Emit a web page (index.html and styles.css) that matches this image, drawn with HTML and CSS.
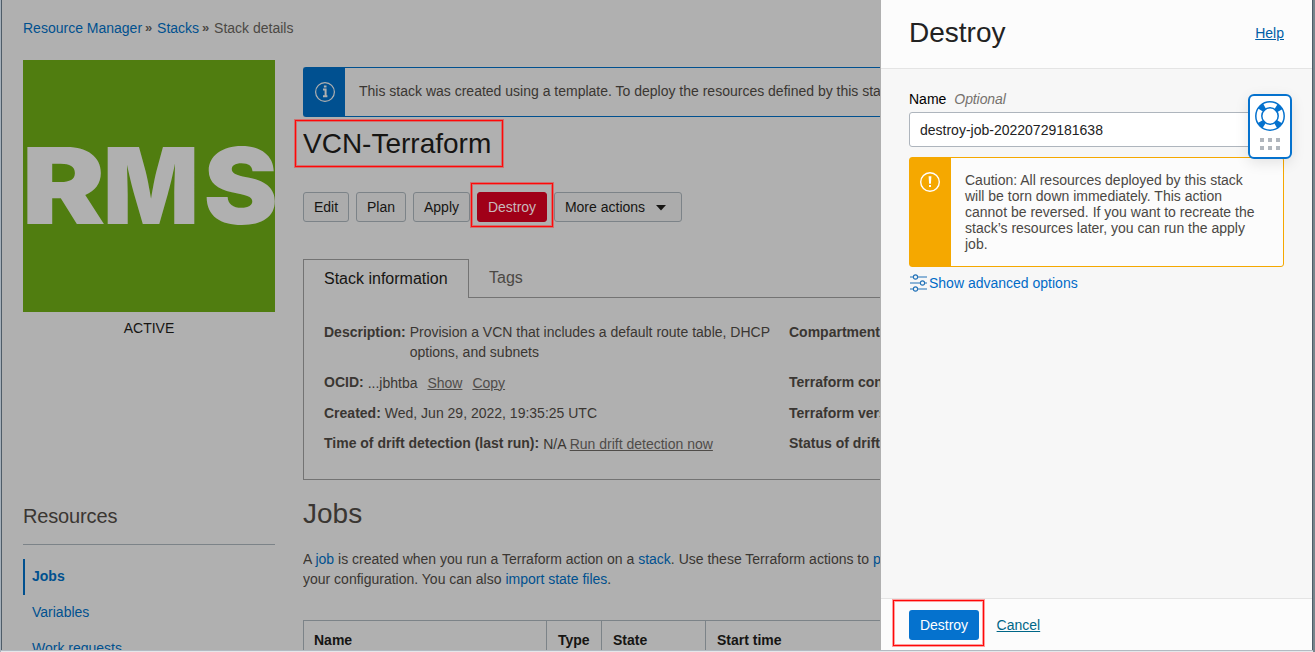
FILE: index.html
```html
<!DOCTYPE html>
<html lang="en">
<head>
<meta charset="utf-8">
<title>Stack details</title>
<link rel="stylesheet" href="styles.css">
</head>
<body>
<div class="screen">
  <div class="page">
    <nav class="crumbs"><a>Resource Manager</a><span class="sep">»</span><a>Stacks</a><span class="sep">»</span><span>Stack details</span></nav>
    <div class="columns">
      <aside class="side">
        <svg class="logo" viewBox="0 0 252 252"><rect width="252" height="252" fill="#507d10"/><g class="logo-text"><text x="-1.5" y="163.5" textLength="84" lengthAdjust="spacingAndGlyphs">R</text><text x="80" y="163.5" textLength="96" lengthAdjust="spacingAndGlyphs">M</text><text x="180.5" y="163.5" textLength="74.5" lengthAdjust="spacingAndGlyphs">S</text></g></svg>
        <div class="status">ACTIVE</div>
        <h3 class="side-title">Resources</h3>
        <ul class="side-list"><li class="current">Jobs</li><li>Variables</li><li>Work requests</li></ul>
      </aside>
      <main class="main">
        <div class="banner">
          <div class="banner-icon"><svg width="22" height="22" viewBox="0 0 22 22"><circle cx="11" cy="11" r="9.4" fill="none" stroke="#b0b0b0" stroke-width="1.2"/><path d="M9 8.6h2.6v6M9 15.2h4.4M9.9 5.5h2.6" fill="none" stroke="#b0b0b0" stroke-width="2"/></svg></div>
          <div class="banner-text">This stack was created using a template. To deploy the resources defined by this stack</div>
        </div>
        <h1 class="title">VCN-Terraform</h1>
        <div class="actions">
          <button class="btn">Edit</button><button class="btn plan">Plan</button><button class="btn apply">Apply</button><button class="btn danger">Destroy</button><button class="btn more">More actions<svg width="10" height="6" viewBox="0 0 10 6"><path d="M0 0h10L5 5.5z" fill="#161513"/></svg></button>
        </div>
        <div class="tabs"><div class="tab active">Stack information</div><div class="tab">Tags</div></div>
        <div class="info">
          <dl class="info-col">
            <div class="row desc"><dt>Description:</dt><dd>Provision a VCN that includes a default route table, DHCP options, and subnets</dd></div>
            <div class="row ocid"><dt>OCID:</dt><dd>...jbhtba <u class="show">Show</u><u class="copy">Copy</u></dd></div>
            <div class="row created"><dt>Created:</dt><dd>Wed, Jun 29, 2022, 19:35:25 UTC</dd></div>
            <div class="row drift"><dt>Time of drift detection (last run):</dt><dd>N/A <u>Run drift detection now</u></dd></div>
          </dl>
          <dl class="info-col">
            <div class="row desc"><dt>Compartment:</dt></div>
            <div class="row ocid"><dt>Terraform configuration:</dt></div>
            <div class="row"><dt>Terraform version:</dt></div>
            <div class="row drift"><dt>Status of drift detection:</dt></div>
          </dl>
        </div>
        <h2 class="jobs-title">Jobs</h2>
        <p class="jobs-text">A <a>job</a> is created when you run a Terraform action on a <a>stack</a>. Use these Terraform actions to <a>plan</a><br>your configuration. You can also <a>import state files</a>.</p>
        <div class="table"><div>Name</div><div>Type</div><div>State</div><div>Start time</div></div>
      </main>
    </div>
  </div>
  <section class="panel">
    <header class="panel-head"><h2>Destroy</h2><a class="help">Help</a></header>
    <div class="panel-body">
      <div class="label"><span>Name</span><i>Optional</i></div>
      <div class="input">destroy-job-20220729181638</div>
      <div class="caution">
        <div class="caution-icon"><svg width="22" height="22" viewBox="0 0 22 22"><circle cx="11" cy="11" r="9.3" fill="none" stroke="#fff" stroke-width="1.4"/><path d="M9.6 5.2h2.8l-.5 7.5h-1.8zM10 14.1h2v2h-2z" fill="#fff"/></svg></div>
        <p>Caution: All resources deployed by this stack will be torn down immediately. This action cannot be reversed. If you want to recreate the stack’s resources later, you can run the apply job.</p>
      </div>
      <a class="advanced"><svg width="18" height="18" viewBox="0 0 18 18" fill="none" stroke="#2272b8" stroke-width="1.1"><path d="M0 3h3M8 3h9M0 9h10M15 9h2M0 15h3M8 15h9"/><circle cx="5.5" cy="3" r="2.1"/><circle cx="12.5" cy="9" r="2.1"/><circle cx="5.5" cy="15" r="2.1"/></svg>Show advanced options</a>
    </div>
    <footer class="panel-foot"><button class="primary">Destroy</button><a class="cancel">Cancel</a></footer>
  </section>
  <div class="support">
    <svg width="32" height="32" viewBox="0 0 32 32"><g fill="none" stroke="#0572ce"><circle cx="16" cy="16" r="11" stroke-width="7" stroke-dasharray="5.4 11.88" stroke-dashoffset="-5.94"/><circle cx="16" cy="16" r="14.2" stroke-width="1.5"/><circle cx="16" cy="16" r="8.2" stroke-width="1.5"/></g></svg>
    <div class="dots"><b></b><b></b><b></b><b></b><b></b><b></b></div>
  </div>
  <div class="mark mark-title"></div><div class="mark mark-action"></div><div class="mark mark-submit"></div>
</div>
</body>
</html>
```
FILE: styles.css
```css
* { box-sizing: border-box; }
body, h1, h2, h3, p, ul, dl, dd { margin: 0; padding: 0; font-weight: 400; }
body { font: 14px/20px "Liberation Sans", Arial, sans-serif; color: #3a3632; }
ul { list-style: none; }
button { font: inherit; margin: 0; }
.screen { position: relative; width: 1315px; height: 652px; overflow: hidden; display: grid; grid-template-columns: 879px 433px; background: #77858c; border-left: 1px solid #a5b0ba; }
.page { height: 650px; overflow: hidden; background: #b0b0b0; border-left: 1px solid #4e5c68; padding: 18px 0 0 21px; }
.page a, .side-list { color: #00508f; }
.crumbs { height: 42px; display: flex; white-space: nowrap; color: #4b4844; }
.sep { width: 15px; padding-left: 3px; font-size: 13px; font-weight: 700; }
.columns { display: grid; grid-template-columns: 252px 577px; gap: 28px; }
.logo { display: block; width: 252px; height: 252px; }
.logo-text { font: 900 106px Inter, sans-serif; fill: #b0b0b0; }
.status { text-align: center; color: #161513; padding-top: 6px; }
.side-title { font-size: 20px; line-height: 28px; margin-top: 164px; padding-bottom: 14px; border-bottom: 1px solid #7c8388; letter-spacing: -.15px; }
.side-list { margin-top: 14px; line-height: 34px; }
.side-list li { height: 36px; padding-left: 9px; }
.side-list .current { font-weight: 700; border-left: 2px solid #00508f; padding-left: 7px; }
.main { overflow: hidden; padding-top: 7px; height: 590px; }
.banner { display: flex; height: 50px; border: 1px solid #00508f; border-right: 0; border-radius: 3px 0 0 3px; }
.banner-icon { flex: none; width: 41px; background: #005090; display: flex; align-items: center; justify-content: center; }
.banner-text { padding: 13px 0 0 14px; white-space: nowrap; }
.title { font-size: 28px; line-height: 34px; margin-top: 10px; color: #161513; }
.actions { display: flex; margin-top: 31px; }
.btn { height: 30px; width: 46px; padding: 0; border: 1px solid #7c8388; border-radius: 3px; background: #acacac; color: #161513; margin-right: 7px; }
.plan { width: 50px; }
.apply { width: 57px; }
.danger { width: 70px; background: #a00018; border-color: #a00018; color: #c9b8bb; }
.more { width: 128px; display: flex; align-items: center; justify-content: center; gap: 11px; padding-right: 5px; }
.more svg { margin-top: 2px; }
.tabs { display: flex; height: 39px; margin-top: 37px; font-size: 16px; }
.tab { flex: 1; border-bottom: 1px solid #737373; padding: 9px 0 0 20px; color: #4b4844; }
.tab.active { flex: none; width: 166px; border: 1px solid #737373; border-bottom: 0; color: #161513; }
.info { height: 182px; border: 1px solid #737373; border-top: 0; border-right: 0; padding: 24px 0 0 20px; display: grid; grid-template-columns: 465px 300px; overflow: hidden; }
.row { display: flex; gap: 4px; min-height: 20px; white-space: nowrap; margin-bottom: 10.5px; }
.row dt { font-weight: 700; }
.ocid dt, .drift dt { margin-top: -1px; }
.desc { height: 40px; }
.desc dd { white-space: normal; width: 366px; }
.row u { color: #4f4c49; }
.show { margin-left: 6px; }
.copy { margin-left: 10px; }
.jobs-title { font-size: 28px; line-height: 34px; margin-top: 17px; }
.jobs-text { margin-top: 18px; white-space: nowrap; }
.table { display: grid; grid-template-columns: 243px 55px 104px 175px; margin-top: 31px; border-top: 1px solid #7c8388; color: #161513; font-weight: 700; }
.table div { height: 40px; padding: 9px 0 0 11px; border-left: 1px solid #7c8388; }
.table div:first-child { padding-left: 10px; }
.panel { height: 651px; display: flex; flex-direction: column; background: #f7f7f7; border-left: 1px solid #b0b0b0; border-right: 1px solid #4e5c68; border-bottom: 1px solid #b3bac2; }
.screen::after { content: ""; position: absolute; left: 0; bottom: 0; width: 1312px; height: 2px; background: linear-gradient(#b3bac2 50%, #e4e7ea 50%); }
.panel-head { height: 69px; background: #fcfcfc; border-bottom: 1px solid #e4e4e4; padding: 0 28px 2px; display: flex; align-items: center; justify-content: space-between; }
.panel-head h2 { font-size: 28px; line-height: 34px; color: #222; }
.help { color: #005ea6; text-decoration: underline; }
.panel-body { flex: 1; padding: 20px 28px 0; }
.label { display: flex; gap: 8px; color: #000; }
.label i { color: #76726e; letter-spacing: -.1px; }
.input { height: 35px; margin-top: 3px; border: 1px solid #aeb5bd; border-radius: 3px; padding: 7px 10px; background: #fff; color: #222; }
.caution { margin-top: 10px; height: 110px; display: flex; border: 1px solid #f5a800; border-radius: 3px; background: #fcfcfc; }
.caution-icon { width: 41px; flex: none; background: #f5a800; padding: 13px 0 0 9px; }
.caution p { padding: 14px 0 0 14px; width: 308px; line-height: 16px; color: #4b4844; }
.advanced { display: flex; align-items: center; margin-top: 6px; padding-left: 1px; color: #006bc7; }
.advanced svg { margin-right: 1px; }
.panel-foot { height: 52px; background: #fcfcfc; border-top: 1px solid #e4e4e4; display: flex; align-items: center; padding-left: 28px; gap: 17.6px; }
.primary { width: 70px; height: 30px; border: 0; border-radius: 3px; padding: 0; background: #0572ce; color: #fff; }
.cancel { color: #006687; text-decoration: underline; }
.support { position: absolute; left: 1247px; top: 94px; width: 44px; height: 65px; background: #fff; border: 2px solid #0572ce; border-radius: 6px; box-shadow: 0 4px 14px rgba(0,0,0,.1); display: flex; flex-direction: column; align-items: center; padding-top: 4px; }
.dots { display: grid; grid-template-columns: repeat(3, 4px); gap: 4px; margin-top: 6px; }
.dots b { width: 4px; height: 4px; background: #b0b6bd; }
.mark { position: absolute; border: 1px solid #ff0808; box-shadow: 0 0 0 1px rgba(255,20,20,.4), inset 0 0 0 1px rgba(255,20,20,.4); }
.mark-title { left: 294px; top: 120px; width: 208px; height: 47px; }
.mark-action { left: 470px; top: 183px; width: 82px; height: 44px; }
.mark-submit { left: 892px; top: 600px; width: 91px; height: 46px; }
```
